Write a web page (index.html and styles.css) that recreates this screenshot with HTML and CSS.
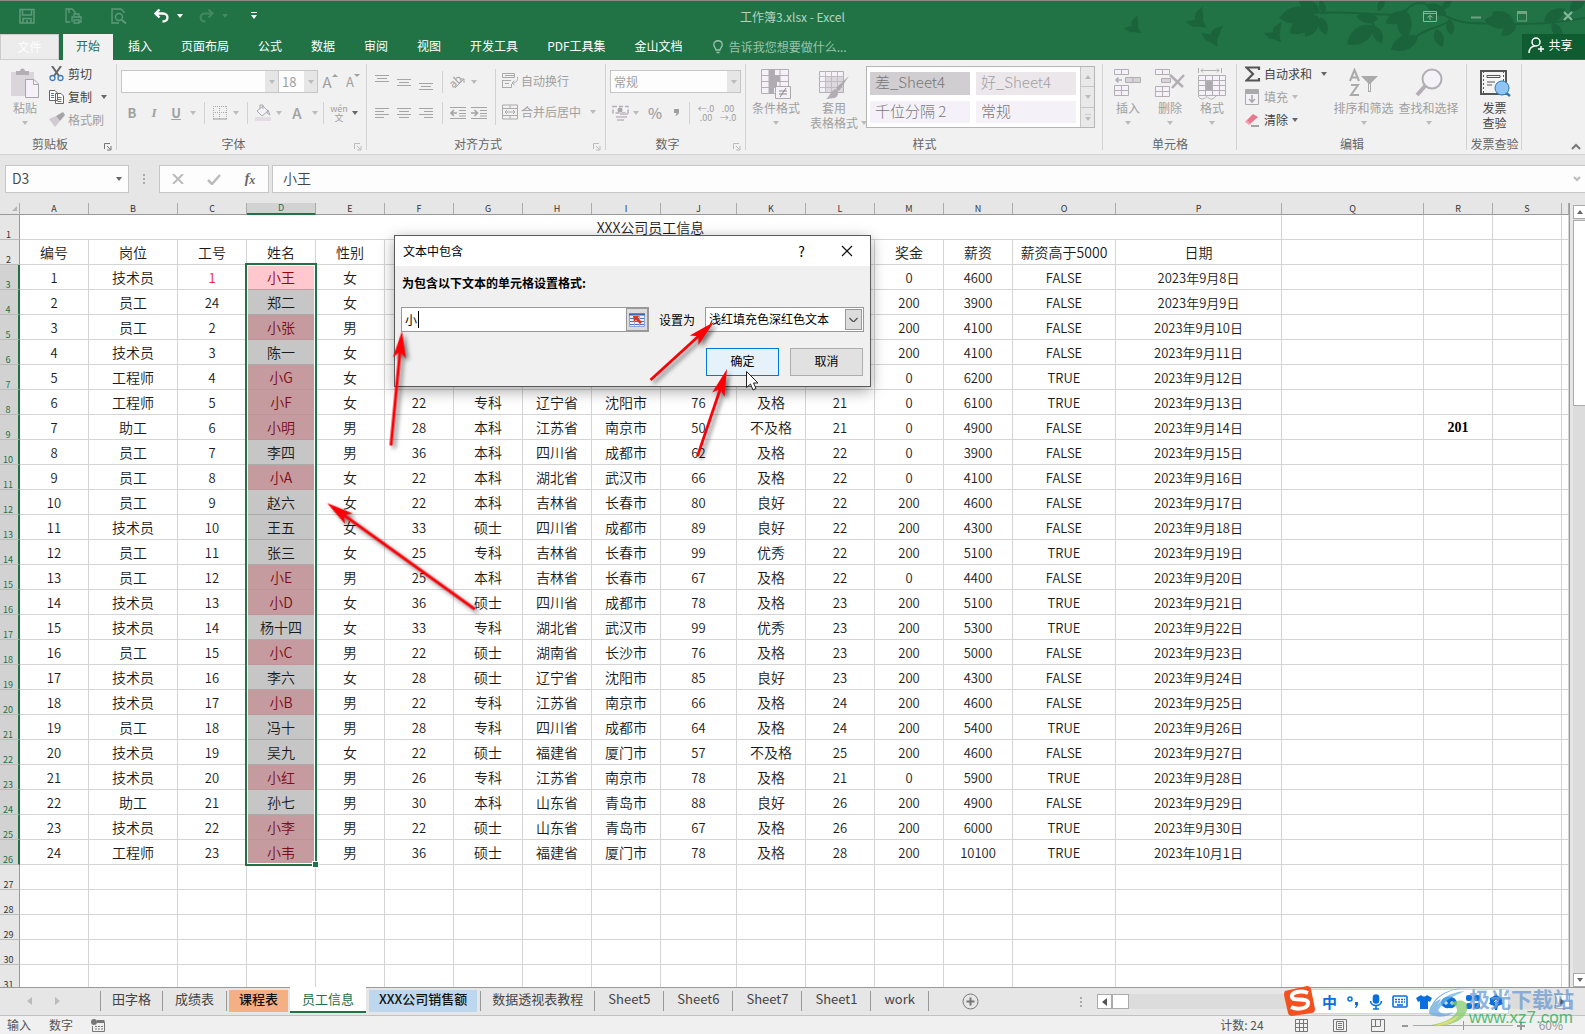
FILE: index.html
```html
<!DOCTYPE html>
<html lang="zh-CN">
<head>
<meta charset="utf-8">
<title>工作簿3.xlsx - Excel</title>
<link rel="stylesheet" href="styles.css">
</head>
<body>
<header class="top">
  <svg class="foliage" width="461" height="60" viewBox="0 0 461 60" aria-hidden="true">
    <defs>
      <path id="leaf" d="M0 0C6-9 18-10 27-2C19 8 7 8 0 0Z"/>
      <path id="bird" d="M0 9L8 7C6 3 9 0 14-4C13 1 15 4 14 8L17 14L9 13C6 14 4 12 0 9Z"/>
    </defs>
    <g fill="#1b633b">
      <use href="#bird" transform="translate(0 18)"/>
      <use href="#bird" transform="translate(62 10) scale(1.2)"/>
      <use href="#bird" transform="translate(82 22) rotate(25) scale(1.2)"/>
      <use href="#bird" transform="translate(142 22) rotate(12) scale(1.1)"/>
      <use href="#leaf" transform="translate(190 12) rotate(176) scale(1.3)"/>
      <use href="#leaf" transform="translate(193 15) rotate(152) scale(1.2)"/>
      <use href="#leaf" transform="translate(196 12) rotate(215) scale(.9)"/>
      <use href="#leaf" transform="translate(194 15) rotate(125) scale(.9)"/>
      <use href="#leaf" transform="translate(196 16) rotate(75) scale(.7)"/>
      <use href="#leaf" transform="translate(200 12) rotate(-100) scale(.5)"/>
      <use href="#leaf" transform="translate(250 25) rotate(150) scale(1.2)"/>
      <use href="#leaf" transform="translate(250 25) rotate(70) scale(.7)"/>
      <use href="#leaf" transform="translate(254 18) rotate(190) scale(.8)"/>
      <use href="#leaf" transform="translate(254 10) rotate(-60) scale(.5)"/>
      <use href="#leaf" transform="translate(280 8) rotate(92) scale(1.1)"/>
      <use href="#leaf" transform="translate(284 12) rotate(160) scale(.9)"/>
      <use href="#leaf" transform="translate(294 36) rotate(160) scale(1.1)"/>
      <use href="#leaf" transform="translate(312 28) rotate(75) scale(.7)"/>
      <use href="#leaf" transform="translate(318 8) rotate(-40) scale(.5)"/>
      <use href="#leaf" transform="translate(303 4) rotate(30) scale(.8)"/>
      <use href="#leaf" transform="translate(325 18) rotate(85) scale(.6)"/>
      <use href="#leaf" transform="translate(390 22) rotate(190) scale(1.1)"/>
      <use href="#leaf" transform="translate(390 22) rotate(210) scale(.9)"/>
      <use href="#leaf" transform="translate(392 23) rotate(145) scale(.7)"/>
      <use href="#leaf" transform="translate(420 20) rotate(-25) scale(.9)"/>
      <use href="#leaf" transform="translate(428 22) rotate(60) scale(.7)"/>
      <use href="#leaf" transform="translate(446 10) rotate(-40) scale(.8)"/>
    </g>
    <g fill="none" stroke="#1b633b" stroke-width="2">
      <path d="M196 12C220 10 244 14 278 14M236 12C244 18 250 22 251 27M282 10C288 2 292 2 300 2C312 10 326 20 346 22C390 24 420 24 461 17M292 36C300 28 312 28 326 20"/>
    </g>
  </svg>
  <div class="titlebar">
    <div class="quick">
      <button class="q1" aria-label="保存"><svg width="16" height="16" fill="none" stroke="#5d9a79" stroke-width="1.5"><path d="M1 1.500H15V15H1ZM3.500 2V7H12.500V2M4 15V10.500H12V15M8 12V15"/></svg></button>
      <button class="q1" aria-label="快速打印"><svg width="17" height="16" fill="none" stroke="#5d9a79" stroke-width="1.300"><path d="M5 14H1V1H7L10 4V6M4 1V5M7 14V9H16V14H14M9 8V6H14V9M9 12H14V15H9Z"/></svg></button>
      <button class="q1" aria-label="打印预览"><svg width="16" height="16" fill="none" stroke="#5d9a79" stroke-width="1.400"><path d="M13 5V4L10 1H1V15H8"/><circle cx="8" cy="9" r="3.500"/><path d="M11 12L15 15.500" stroke-width="2"/></svg></button>
      <button class="undo" aria-label="撤消"><svg width="15" height="14" fill="none" stroke="#fff" stroke-width="2.300"><path d="M1.500 4.500H9C15 4.500 15 12.500 8.500 12.500M5.500 .5L1.500 4.500L5.500 8.500"/></svg><i class="caret white"></i></button>
      <button class="undo" aria-label="恢复"><svg width="15" height="14" fill="none" stroke="#44895f" stroke-width="2"><path d="M13.500 4.500H6C0 4.500 0 12.500 6.500 12.500M9.500 .5L13.500 4.500L9.500 8.500"/></svg><i class="caret dimgreen"></i></button>
      <button class="custom" aria-label="自定义快速访问工具栏"><i class="bar"></i><i class="caret white"></i></button>
    </div>
    <div class="doc-title">工作簿3.xlsx - Excel</div>
    <div class="winctl">
      <button aria-label="功能区显示选项"><svg width="14" height="11" fill="none" stroke="#8ab79d"><path d="M.5 .5H13.500V10.500H.5ZM1 2.500H13M7 9V4.500M4.500 6.500L7 4.500L9.500 6.500"/></svg></button>
      <button aria-label="最小化"><svg width="10" height="11"><path d="M0 6.500H10" stroke="#6fa585" stroke-width="2"/></svg></button>
      <button aria-label="最大化"><svg width="10" height="11" fill="none" stroke="#6fa585"><path d="M.5 .5H9.500V10H.5Z"/><path d="M0 1.500H10" stroke-width="3"/></svg></button>
      <button aria-label="关闭"><svg width="10" height="10" stroke="#8ab79d" stroke-width="2"><path d="M1 1L9 9M9 1L1 9"/></svg></button>
    </div>
  </div>
  <nav class="menubar">
    <button class="file">文件</button>
    <button class="tab on">开始</button>
    <button class="tab">插入</button><button class="tab">页面布局</button><button class="tab">公式</button><button class="tab">数据</button><button class="tab">审阅</button><button class="tab">视图</button><button class="tab">开发工具</button><button class="tab">PDF工具集</button><button class="tab">金山文档</button>
    <button class="tell"><svg width="10" height="14" fill="none" stroke="#9cc3ad" stroke-width="1.300"><path d="M3 10C3 8 .8 7.500 .8 4.800C.8-.6 9.200-.6 9.200 4.800C9.200 7.500 7 8 7 10ZM3.500 12.500H6.500"/></svg>告诉我您想要做什么...</button>
    <button class="share"><svg width="16" height="16" fill="none" stroke="#fff" stroke-width="1.500"><circle cx="8" cy="5" r="4"/><path d="M1 16C1 11.500 4 9 7 9M13 9V15M10 12H16"/></svg>共享</button>
  </nav>
</header>

<section class="ribbon">
  <div class="group g-clip">
    <div class="body">
      <button class="big dim paste"><svg width="30" height="32"><path d="M1 4H24V28H1Z" fill="#d9d5da"/><path d="M6 3H10C10-.5 15-.5 15 3H19V7H6Z" fill="#b3aeb4"/><path d="M15.500 11.500H24L28.500 16V29.500H15.500Z" fill="#f5f1f8" stroke="#aaa5ab"/><path d="M23.500 12V16.500H28" fill="none" stroke="#aaa5ab"/></svg><span>粘贴</span><i class="caret"></i></button>
      <div class="stack">
        <button class="small"><svg width="16" height="16" fill="none"><path d="M3 0L10 10M12 0L5 10" stroke="#666" stroke-width="2"/><circle cx="3.500" cy="12" r="2.500" stroke="#3f7cb8" stroke-width="1.300"/><circle cx="11.500" cy="12" r="2.500" stroke="#3f7cb8" stroke-width="1.300"/></svg>剪切</button>
        <button class="small"><svg width="16" height="16" fill="#fff" stroke="#666"><path d="M.5 1.500H6L8.500 4V11.500H.5ZM6.500 4.500H12L14.500 7V14.500H6.500Z"/><path d="M2 4.500H5M2 6.500H5M2 8.500H5M8.500 8.500H12.500M8.500 10.500H12.500M8.500 12.500H12.500" stroke="#3f7cb8"/></svg>复制<i class="caret dark far"></i></button>
        <button class="small dim"><svg width="16" height="16"><path d="M0 7L7 4L11 9L6 15Z" fill="#d0cbd1"/><path d="M7 4L14 0L16 3L11 9Z" fill="#a5a5a5"/></svg>格式刷</button>
      </div>
    </div>
    <div class="label">剪贴板<svg class="launch dk" width="8" height="8"><use href="#launch"/></svg></div>
  </div>

  <div class="group g-font">
    <div class="body col">
      <div class="row">
        <div class="combo w-name"><input aria-label="字体"><button aria-label="字体列表"><i class="caret"></i></button></div>
        <div class="combo w-size"><input aria-label="字号" value="18"><button aria-label="字号列表"><i class="caret"></i></button></div>
        <button class="ic grow">A<svg width="6" height="3"><path d="M0 3L3 0L6 3Z"/></svg></button>
        <button class="ic grow less">A<svg width="6" height="3"><path d="M0 0L3 3L6 0Z"/></svg></button>
      </div>
      <div class="row">
        <button class="ic b">B</button><button class="ic it">I</button><button class="ic u">U</button><button class="dd" aria-label="下划线选项"><i class="caret"></i></button>
        <i class="vsep"></i>
        <button class="ic n" aria-label="边框"><svg width="14" height="14" fill="none" stroke="#aaa"><path d="M.5 0V13M6.500 0V13M13.500 0V13M0 .5H13M0 6.500H13" stroke-dasharray="1 1"/><path d="M0 13H14" stroke="#999"/></svg></button><button class="dd" aria-label="边框选项"><i class="caret"></i></button>
        <i class="vsep"></i>
        <button class="ic n" aria-label="填充颜色"><svg width="17" height="17"><path d="M2 7L8 2L13 7L7 12Z" fill="#f5f1f8" stroke="#aaa"/><path d="M5 5V1H8V5M13 6L15 11L12 9Z" fill="none" stroke="#aaa"/><path d="M0 13H16V17H0Z" fill="#e3dce5"/></svg></button><button class="dd" aria-label="填充选项"><i class="caret"></i></button>
        <button class="ic big-a">A</button><button class="dd" aria-label="字体颜色选项"><i class="caret"></i></button>
        <i class="vsep short"></i>
        <button class="ic n wen"><span>wén</span><span>文</span></button><button class="dd" aria-label="拼音选项"><i class="caret dark"></i></button>
      </div>
    </div>
    <div class="label">字体<svg class="launch" width="8" height="8"><path id="launch" d="M.5 6V.5H6M3 3L6.500 6.500M7 3V7H3" fill="none" stroke="currentColor"/></svg></div>
  </div>

  <div class="group g-align">
    <div class="body">
      <div class="col">
        <div class="row">
          <button class="ic" aria-label="顶端对齐"><svg width="14" height="16" stroke="#a5a5a5"><path d="M0 1.500H14M2 4.500H12M0 7.500H14"/></svg></button>
          <button class="ic" aria-label="垂直居中"><svg width="14" height="16" stroke="#a5a5a5"><path d="M0 5.500H14M2 8.500H12M0 11.500H14"/></svg></button>
          <button class="ic" aria-label="底端对齐"><svg width="14" height="16" stroke="#a5a5a5"><path d="M0 9.500H14M2 12.500H12M0 15.500H14"/></svg></button>
          <i class="vsep"></i>
          <button class="ic n" aria-label="方向"><svg width="18" height="16"><text x="1" y="12" font-size="11" transform="rotate(-40 6 9)" class="abtext">ab</text><path d="M6 14L15 5M11 5H15V9" fill="none" stroke="#a5a5a5"/></svg></button><button class="dd" aria-label="方向选项"><i class="caret"></i></button>
        </div>
        <div class="row">
          <button class="ic" aria-label="左对齐"><svg width="14" height="12" stroke="#a5a5a5"><path d="M0 1.500H14M0 4.500H9M0 7.500H14M0 10.500H9"/></svg></button>
          <button class="ic" aria-label="居中"><svg width="14" height="12" stroke="#a5a5a5"><path d="M0 1.500H14M2 4.500H12M0 7.500H14M2 10.500H12"/></svg></button>
          <button class="ic" aria-label="右对齐"><svg width="14" height="12" stroke="#a5a5a5"><path d="M0 1.500H14M5 4.500H14M0 7.500H14M5 10.500H14"/></svg></button>
          <i class="vsep"></i>
          <button class="ic n" aria-label="减少缩进"><svg width="16" height="14" fill="none" stroke="#a5a5a5"><path d="M0 1.500H16M9 4.500H16M9 7.500H16M0 12.500H16M9 10H16"/><path d="M7 7H1M4 4L1 7L4 10" stroke-width="1.600"/></svg></button>
          <button class="ic" aria-label="增加缩进"><svg width="16" height="14" fill="none" stroke="#a5a5a5"><path d="M0 1.500H16M9 4.500H16M9 7.500H16M0 12.500H16M9 10H16"/><path d="M0 7H6M3.500 4L6.500 7L3.500 10" stroke-width="1.600"/></svg></button>
        </div>
      </div>
      <i class="vsep tall"></i>
      <div class="col">
        <div class="row"><button class="small dim"><svg width="16" height="16" fill="none" stroke="#aaa"><path d="M.5 .5H12.500V4.500H.5ZM3 2.500H12.500M.5 7.500H9M3 10.500H7M.5 14.500H9.500V11M.5 7V15M15.500 4C16 8 14 10 10 10M12.500 7.500L10 10L12.500 12"/></svg>自动换行</button></div>
        <div class="row"><button class="small dim"><svg width="16" height="16" fill="none" stroke="#aaa"><path d="M.5 1H15.500V15H.5ZM.5 4.500H15.500M.5 11.500H15.500M8 1V4.500M8 11.500V15M3 8H13M5 6L3 8L5 10M11 6L13 8L11 10"/></svg>合并后居中<i class="caret far"></i></button></div>
      </div>
    </div>
    <div class="label">对齐方式<svg class="launch" width="8" height="8"><use href="#launch"/></svg></div>
  </div>

  <div class="group g-num">
    <div class="body col">
      <div class="row"><div class="combo w-fmt"><input aria-label="数字格式" value="常规"><button aria-label="格式列表"><i class="caret"></i></button></div></div>
      <div class="row">
        <button class="ic n" aria-label="会计数字格式"><svg width="17" height="16"><path d="M1 1.500H16V8H1Z" fill="#f5f1f8" stroke="#b3aeb4" stroke-width="1.500" stroke-dasharray="4 2"/><circle cx="8" cy="5" r="2.500" fill="#aaa"/><path d="M8 9H16M9 12H15M4 12H9M5 15H12" stroke="#c9c4ca" stroke-width="2"/></svg></button><button class="dd" aria-label="会计选项"><i class="caret"></i></button>
        <button class="ic pct wide">%</button><button class="ic pct comma" aria-label="千位分隔样式"><svg width="5" height="7"><path d="M0 0H5V3C5 5 3.500 6.500 1 7C2 6 2.500 5 2.500 4H0Z" fill="#a0a0a0"/></svg></button>
        <i class="vsep"></i>
        <button class="ic dec"><span>←.0</span><span>.00</span></button><button class="ic dec"><span>.00</span><span>→.0</span></button>
      </div>
    </div>
    <div class="label">数字<svg class="launch" width="8" height="8"><use href="#launch"/></svg></div>
  </div>

  <div class="group g-style">
    <div class="body">
      <button class="big dim w60"><svg width="30" height="32"><path d="M.5 1.500H27.500V25.500H.5Z" fill="#f5f1f8" stroke="#b3aeb4"/><path d="M8 1V26M19 1V26M0 7.500H28M0 13.500H28M0 19.500H28" stroke="#b3aeb4"/><path d="M8 1H14V7H8ZM8 8H19V13H8ZM8 14H16V19H8ZM8 20H13V25H8Z" fill="#b0abb1"/><path d="M14.500 18.500H29.500V30.500H14.500Z" fill="#f5f1f8" stroke="#aaa"/><path d="M18 23H26M18 26H26M25 20L19 29" stroke="#888"/></svg><span>条件格式</span><i class="caret"></i></button>
      <button class="big dim w60"><svg width="30" height="32"><path d="M.5 3.500H24.500V24.500H.5Z" fill="#f5f1f8" stroke="#b3aeb4"/><path d="M7 9H24V24H7Z" fill="#dcd8de"/><path d="M6.500 3V25M12.500 3V25M18.500 3V25M0 8.500H25M0 13.500H25M0 19.500H25" stroke="#c0bbc1"/><path d="M30 8L20 23L17 20Z" fill="#aaa"/><path d="M17 21C20 22 20 28 16 30L7 31C12 27 11 23 17 21Z" fill="#b3aeb4"/></svg><span>套用<br>表格格式<i class="caret side"></i></span></button>
      <div class="gallery">
        <div class="tiles"><button class="bad">差_Sheet4</button><button class="good">好_Sheet4</button><button>千位分隔 2</button><button>常规</button></div>
        <div class="scroller"><button aria-label="上一行"><i class="caret up"></i></button><button aria-label="下一行"><i class="caret"></i></button><button aria-label="其他"><i class="bar"></i><i class="caret"></i></button></div>
      </div>
    </div>
    <div class="label">样式</div>
  </div>

  <div class="group g-cells">
    <div class="body">
      <button class="big dim w42"><svg width="28" height="32" fill="#f5f1f8" stroke="#b3aeb4"><path d="M.5 1.500H14.500V6.500H.5ZM7.500 1.500V6.500M.5 17.500H14.500V27.500H.5ZM7.500 17.500V27.500M.5 22.500H14.500"/><path d="M11.500 9.500H26.500V14.500H11.500ZM19 9.500V14.500" fill="#d8d3d9"/><path d="M8 12H2M4.500 9.500L2 12L4.500 14.500" fill="none" stroke-width="1.600"/></svg><span>插入</span><i class="caret"></i></button>
      <button class="big dim w42"><svg width="30" height="32" fill="#f5f1f8" stroke="#b3aeb4"><path d="M.5 1.500H14.500V6.500H.5ZM7.500 1.500V6.500M.5 18.500H14.500V28.500H.5ZM7.500 18.500V28.500M.5 23.500H14.500"/><path d="M6.500 10.500H15.500V14.500H6.500Z" fill="#d8d3d9"/><path d="M15 7L28 19M29 7L17 20" stroke-width="2.500" fill="none"/></svg><span>删除</span><i class="caret"></i></button>
      <button class="big dim w42"><svg width="28" height="32" fill="#f5f1f8" stroke="#b3aeb4"><path d="M.5 7.500H27.500V27.500H.5Z"/><path d="M7.500 7V28M14.500 7V28M21.500 7V28M0 12.500H28M0 17.500H28M0 22.500H28" /><path d="M8 13H14V22H8Z" fill="#aaa"/><path d="M.5 0V5M23.500 0V5M3 2.500H21M5 .5L3 2.500L5 4.500M19 .5L21 2.500L19 4.500M0 28C3 32 5 32 9 28.500C12 32 15 32 18 28" fill="none"/></svg><span>格式</span><i class="caret"></i></button>
    </div>
    <div class="label">单元格</div>
  </div>

  <div class="group g-edit">
    <div class="body">
      <div class="stack">
        <button class="small"><svg width="16" height="16"><path d="M14 4V1.500H1.500L8 8L1.500 14.500H14V12" fill="none" stroke="#555" stroke-width="2.200"/></svg>自动求和<i class="caret dark far"></i></button>
        <button class="small dim"><svg width="16" height="16" fill="#f5f1f8" stroke="#aaa"><path d="M.5 .5H13.500V15.500H.5Z"/><path d="M1 3H13" stroke-width="4"/><path d="M7 6V13M4 10L7 13L10 10" fill="none" stroke-width="1.600"/></svg>填充<i class="caret"></i></button>
        <button class="small"><svg width="16" height="16"><path d="M1 9L8 2L13 5L5 12Z" fill="#e8798d"/><path d="M0 10L4 13L6 12L2 8Z" fill="#f0a0ae"/><path d="M6 14H14" stroke="#555"/></svg>清除<i class="caret dark"></i></button>
      </div>
      <button class="big dim w65"><svg width="30" height="32" fill="none" stroke="#aaa" stroke-width="2"><path d="M1 13L5.500 2L10 13M3 9.500H8.500M2 17H9L2 27H10"/><path d="M12 8H29L22 15V24H19V15Z" fill="#aaa" stroke="none"/><path d="M20.500 16V23" stroke="#f5f1f8" stroke-width="1"/></svg><span>排序和筛选</span><i class="caret"></i></button>
      <button class="big dim w65"><svg width="30" height="32"><path d="M3 27L12 17" stroke="#b3aeb4" stroke-width="4"/><circle cx="18" cy="11" r="9.500" fill="#f5f1f8" stroke="#b3aeb4" stroke-width="2"/></svg><span>查找和选择</span><i class="caret"></i></button>
    </div>
    <div class="label">编辑</div>
  </div>

  <div class="group g-inv">
    <div class="body">
      <button class="big"><svg width="32" height="32"><path d="M2 3H27V26H2Z" fill="#f4f4f4" stroke="#555" stroke-width="2" /><path d="M4.500 3V26M24.500 3V26" stroke="#555" stroke-dasharray="2 2"/><path d="M8 7.500H21V9.500H8Z" fill="none" stroke="#555"/><path d="M8 14H16M8 17H13" stroke="#555"/><path d="M26 24L31 28" stroke="#2a7ab8" stroke-width="2.500"/><circle cx="23" cy="20" r="7" fill="#90c4f5" stroke="#2a7ab8"/></svg><span>发票<br>查验</span></button>
    </div>
    <div class="label">发票查验</div>
  </div>
  <button class="collapse" aria-label="折叠功能区"><svg width="10" height="7" fill="none" stroke="#777" stroke-width="2"><path d="M1 6L5 2L9 6"/></svg></button>
</section>

<section class="formula">
  <div class="namebox"><input aria-label="名称框" value="D3"><button aria-label="名称列表"><i class="caret dark"></i></button></div>
  <i class="dots"></i>
  <div class="fx">
    <button aria-label="取消"><svg width="12" height="10" stroke="#bbb" stroke-width="2"><path d="M1 0L11 10M11 0L1 10"/></svg></button>
    <button aria-label="输入"><svg width="14" height="11" fill="none" stroke="#bbb" stroke-width="2.500"><path d="M1 6L5 10L13 1"/></svg></button>
    <button class="fn">f<small>x</small></button>
  </div>
  <div class="entry"><input aria-label="编辑栏" value="小王"><svg width="8" height="6" fill="none" stroke="#bbb" stroke-width="2"><path d="M1 1L4 4L7 1"/></svg></div>
</section>

<main class="work">
  <div class="sheet">
    <table class="cells">
      <colgroup><col class="c20"><col class="c69"><col class="c89"><col class="c69"><col class="c69"><col class="c69"><col class="c69"><col class="c69"><col class="c69"><col class="c69"><col class="c76"><col class="c69"><col class="c69"><col class="c69"><col class="c69"><col class="c103"><col class="c166"><col class="c142"><col class="c69"><col class="c69"><col></colgroup>
      <thead><tr><th><svg width="5" height="5"><path d="M5 0V5H0Z" fill="#b5b5b5"/></svg></th><th>A</th><th>B</th><th>C</th><th class="on">D</th><th>E</th><th>F</th><th>G</th><th>H</th><th>I</th><th>J</th><th>K</th><th>L</th><th>M</th><th>N</th><th>O</th><th>P</th><th>Q</th><th>R</th><th>S</th><th></th></tr></thead>
      <tbody id="rows"></tbody>
    </table>
  </div>
  <div class="vscroll"><button aria-label="向上滚动"><i class="caret up dark"></i></button><i class="thumb"></i><button class="down" aria-label="向下滚动"><i class="caret dark"></i></button></div>
</main>

<footer>
  <div class="sheetbar">
    <div class="nav"><button aria-label="上一个工作表"><svg width="5" height="8"><path d="M5 0V8L0 4Z" fill="#bbb"/></svg></button><button aria-label="下一个工作表"><svg width="5" height="8"><path d="M0 0V8L5 4Z" fill="#bbb"/></svg></button></div>
    <div class="tabs"><button>田字格</button><button>成绩表</button><button class="orange">课程表</button><button class="on">员工信息</button><button class="blue">XXX公司销售额</button><button class="first">数据透视表教程</button><button>Sheet5</button><button>Sheet6</button><button>Sheet7</button><button>Sheet1</button><button>work</button></div>
    <button class="add" aria-label="新工作表"><svg width="17" height="17" fill="none" stroke="#777"><circle cx="8.500" cy="8.500" r="7.500"/><path d="M8.500 4.500V12.500M4.500 8.500H12.500" stroke-width="2"/></svg></button>
    <i class="dots"></i>
    <div class="hscroll"><button aria-label="向左滚动"><svg width="5" height="8"><path d="M5 0V8L0 4Z" fill="#555"/></svg></button><i class="thumb"></i><button class="right" aria-label="向右滚动"><svg width="5" height="8"><path d="M0 0V8L5 4Z" fill="#555"/></svg></button></div>
  </div>
  <div class="status">
    <span>输入</span><span>数字</span>
    <svg width="14" height="13"><path d="M4 1H14V13H2V7" fill="#f0f0f0"/><path d="M6 1H13.500V4H6Z" fill="#777"/><circle cx="3" cy="3" r="3" fill="#777"/><path d="M13.500 3V12.500H1.500V7" fill="none" stroke="#777"/><path d="M4 7.500H12M4 10H12" stroke="#777" stroke-dasharray="2 1"/></svg>
    <span class="count">计数: 24</span>
    <button aria-label="普通"><svg width="14" height="13" fill="none" stroke="#777"><path d="M.5 .5H12.500V12.500H.5ZM4.500 0V13M8.500 0V13M0 4.500H13M0 8.500H13"/></svg></button>
    <button aria-label="页面布局视图"><svg width="14" height="13" fill="none" stroke="#777"><path d="M.5 .5H13.500V12.500H.5ZM3.500 2.500H10.500V10.500H3.500ZM5 4.500H9M5 6.500H9M5 8.500H9"/></svg></button>
    <button aria-label="分页预览"><svg width="14" height="13" fill="none" stroke="#777"><path d="M.5 .5H13.500V12.500H.5ZM4.500 0V7M9.500 0V7.500M0 7.500H9"/></svg></button>
    <div class="zoom"><svg width="8" height="9" stroke="#999" stroke-width="2"><path d="M1 5H7"/></svg><i></i><svg width="8" height="9" stroke="#999" stroke-width="2"><path d="M0 5H8M4 1V9"/></svg></div>
    <span class="pct60">60%</span>
  </div>
</footer>

<form class="dialog" role="dialog" aria-label="文本中包含">
  <div class="dlg-title"><span>文本中包含</span><button type="button">?</button><button type="button" aria-label="关闭"><svg width="12" height="12" stroke="#111" stroke-width="1.200"><path d="M1 1L11 11M11 1L1 11"/></svg></button></div>
  <div class="dlg-body">
    <label class="lead" for="txt">为包含以下文本的单元格设置格式:</label>
    <div class="dlg-row">
      <div class="ref"><input id="txt" value="小"><i class="ibeam"></i><button type="button" aria-label="选择区域"><svg width="16" height="14"><path d="M.5 .5H15.500V13.500H.5Z" fill="#e9effb" stroke="#8aa5d6"/><path d="M0 1.500H16" stroke="#3e66ad" stroke-width="2"/><path d="M1 5.500H15M1 8.500H15M1 11.500H15" stroke="#4a72b8"/><path d="M5.500 3V13M10.500 3V13" stroke="#9fb6de"/><path d="M4 3H10L9 5L13 9L11 11L7 7L5 9Z" fill="#d43a1c"/></svg></button></div>
      <label for="fmt">设置为</label>
      <div class="pick"><select id="fmt"><option>浅红填充色深红色文本</option></select><svg width="9" height="6" fill="none" stroke="#555" stroke-width="1.300"><path d="M.5 1L4.500 5L8.500 1"/></svg></div>
    </div>
    <div class="dlg-btns"><button type="button" class="ok">确定</button><button type="button">取消</button></div>
  </div>
</form>

<svg class="arrows" width="800" height="640" aria-hidden="true">
  <defs><path id="head" d="M0 0L27-6.500L21 0L27 6.500Z"/></defs>
  <g fill="#fb0007" stroke="#fb0007">
    <g transform="translate(402 331) rotate(95.500)"><use href="#head" stroke="none"/><path d="M20 0H115" stroke-width="2.800"/></g>
    <g transform="translate(714 322) rotate(137.600)"><use href="#head" stroke="none"/><path d="M20 0H86" stroke-width="2.800"/></g>
    <g transform="translate(727 369) rotate(108.700)"><use href="#head" stroke="none"/><path d="M20 0H92" stroke-width="2.800"/></g>
    <g transform="translate(327 503) rotate(35.700)"><use href="#head" stroke="none"/><path d="M20 0H182" stroke-width="2.800"/></g>
  </g>
  <path d="M746.500 371.500V387.500L750.500 384L753 390L756 388.500L753.500 383H758Z" fill="#fff" stroke="#222"/>
</svg>

<div class="ime">
  <svg class="sogou" width="32" height="32" viewBox="0 0 32 32"><path d="M1 6L23 1Q26 1 27 4L31 24Q31 27 28 28L8 31Q5 31 4 28L0 10Q0 7 1 6Z" fill="#f4511e"/><path d="M24 8C17 5 7 7 8 12C9 17 24 12 24 18C24 24 13 25 7 22" fill="none" stroke="#fff" stroke-width="4"/></svg>
  <b>中</b>
  <svg width="14" height="14"><circle cx="4" cy="4" r="2" fill="none" stroke="#0a6fdc" stroke-width="1.500"/><path d="M9 7H12V10L10 13H9L10 10H9Z" fill="#0a6fdc"/></svg>
  <svg width="14" height="16" fill="none" stroke="#0a6fdc" stroke-width="1.600"><rect x="4.500" y="1" width="5" height="8" rx="2.500" fill="#0a6fdc"/><path d="M1.500 7C1.500 13 12.500 13 12.500 7M7 12V15M4 15H10"/></svg>
  <svg width="16" height="13" fill="none" stroke="#0a6fdc" stroke-width="1.600"><rect x="1" y="1" width="14" height="11" rx="1"/><path d="M3 4.500H13M3 7H13" stroke-dasharray="2 1"/><path d="M5 10H11"/></svg>
  <svg width="16" height="14" fill="#0a6fdc"><path d="M0 3L5 0Q8 3 11 0L16 3L14 7L12 6V14H4V6L2 7Z"/></svg>
  <svg width="16" height="14"><path d="M3 3Q8 0 13 3Q16 5 16 9Q13 14 8 13Q3 14 0 9Q0 5 3 3Z" fill="#0a6fdc"/><path d="M3 8H7M9 8H13M5 6V10M11 6V10" stroke="#fff"/></svg>
  <svg width="14" height="14" fill="#0a6fdc"><rect width="6" height="6" rx="2"/><rect x="8" width="6" height="6" rx="2"/><rect y="8" width="6" height="6" rx="2"/><rect x="8" y="8" width="6" height="6" rx="2"/></svg>
  <svg width="14" height="16"><path d="M7 0L9 2L13 4V8L14 10L9 12L8 16H6L5 12L0 10L1 8V4L5 2Z" fill="#0a6fdc"/><path d="M7 6V12M5 8L7 6L9 8" fill="none" stroke="#fff"/></svg>
</div>
<div class="mark">
  <svg width="48" height="40" viewBox="0 0 48 40"><path d="M44 1C22 0 4 12 4 26C2 14 16 0 44 1Z" fill="#4f94d4"/><path d="M38 4C18 6 8 16 8 28C16 14 24 10 38 4Z" fill="#62b3e4"/><path d="M14 12C6 24 14 30 26 25C20 32 4 30 2 26C2 18 8 14 14 12Z" fill="#6aa8dc"/><path d="M22 17C34 10 44 14 39 26C34 36 18 40 4 38C18 36 28 30 30 24C30 18 26 17 22 17Z" fill="#86cc6b"/><path d="M32 28C28 36 14 40 6 39C16 36 26 32 32 28Z" fill="#d9d94f"/></svg>
  <div><b>极光下载站</b><span>www.xz7.com</span></div>
</div>
<script src="sheet.js"></script>
</body>
</html>
```
FILE: sheet.js
```js
// Columns A–P of the worksheet, one string per row, starting at row 2.
const records = [
  '编号|岗位|工号|姓名|性别||||||||奖金|薪资|薪资高于5000|日期',
  '1|技术员|1|小王|女||||||||0|4600|FALSE|2023年9月8日',
  '2|员工|24|郑二|女||||||||200|3900|FALSE|2023年9月9日',
  '3|员工|2|小张|男||||||||200|4100|FALSE|2023年9月10日',
  '4|技术员|3|陈一|女||||||||200|4100|FALSE|2023年9月11日',
  '5|工程师|4|小G|女||||||||0|6200|TRUE|2023年9月12日',
  '6|工程师|5|小F|女|22|专科|辽宁省|沈阳市|76|及格|21|0|6100|TRUE|2023年9月13日',
  '7|助工|6|小明|男|28|本科|江苏省|南京市|50|不及格|21|0|4900|FALSE|2023年9月14日',
  '8|员工|7|李四|男|36|本科|四川省|成都市|62|及格|22|0|3900|FALSE|2023年9月15日',
  '9|员工|8|小A|女|22|本科|湖北省|武汉市|66|及格|22|0|4100|FALSE|2023年9月16日',
  '10|员工|9|赵六|女|22|本科|吉林省|长春市|80|良好|22|200|4600|FALSE|2023年9月17日',
  '11|技术员|10|王五|女|33|硕士|四川省|成都市|89|良好|22|200|4300|FALSE|2023年9月18日',
  '12|员工|11|张三|女|25|专科|吉林省|长春市|99|优秀|22|200|5100|TRUE|2023年9月19日',
  '13|员工|12|小E|男|25|本科|吉林省|长春市|67|及格|22|0|4400|FALSE|2023年9月20日',
  '14|技术员|13|小D|女|36|硕士|四川省|成都市|78|及格|23|200|5100|TRUE|2023年9月21日',
  '15|技术员|14|杨十四|女|33|专科|湖北省|武汉市|99|优秀|23|200|5300|TRUE|2023年9月22日',
  '16|员工|15|小C|男|22|硕士|湖南省|长沙市|76|及格|23|200|5000|FALSE|2023年9月23日',
  '17|技术员|16|李六|女|28|硕士|辽宁省|沈阳市|85|良好|23|200|4300|FALSE|2023年9月24日',
  '18|技术员|17|小B|男|22|专科|江苏省|南京市|66|及格|24|200|4600|FALSE|2023年9月25日',
  '19|员工|18|冯十|男|28|专科|四川省|成都市|64|及格|24|200|5400|TRUE|2023年9月26日',
  '20|技术员|19|吴九|女|22|硕士|福建省|厦门市|57|不及格|25|200|4600|FALSE|2023年9月27日',
  '21|技术员|20|小红|男|26|专科|江苏省|南京市|78|及格|21|0|5900|TRUE|2023年9月28日',
  '22|助工|21|孙七|男|30|本科|山东省|青岛市|88|良好|26|200|4900|FALSE|2023年9月29日',
  '23|技术员|22|小李|男|22|硕士|山东省|青岛市|67|及格|26|200|6000|TRUE|2023年9月30日',
  '24|工程师|23|小韦|男|36|硕士|福建省|厦门市|78|及格|28|200|10100|TRUE|2023年10月1日'
];
const body = document.getElementById('rows');
const blanks = n => '<td></td>'.repeat(n);
let html = '<tr><th>1</th><td colspan="16">XXX公司员工信息</td>' + blanks(4) + '</tr>';
for (let row = 2; row <= 31; row++) {
  const selected = row >= 3 && row <= 26;
  html += `<tr><th${selected ? ' class="on"' : ''}>${row}</th>`;
  const record = records[row - 2];
  if (record) {
    record.split('|').forEach((text, col) => {
      const cls = [];
      if (/^[\dA-Z]/.test(text)) cls.push('num');
      if (row === 3 && col === 2) cls.push('red');
      if (selected && col === 3) {
        cls.push('sel');
        if (text.startsWith('小')) cls.push('hit');
        if (row === 3) cls.push('active');
      }
      const frame = row === 3 && col === 3 ? '<i class="frame"></i>' : '';
      html += `<td class="${cls.join(' ')}">${text}${frame}</td>`;
    });
    html += blanks(1) + (row === 9 ? '<td class="serif">201</td>' : blanks(1)) + blanks(2);
  } else {
    html += blanks(20);
  }
  html += '</tr>';
}
body.innerHTML = html;
```
FILE: styles.css
```css
* { box-sizing: border-box; }
html, body { height: 100%; }
body {
  margin: 0;
  display: flex;
  flex-direction: column;
  position: relative;
  overflow: hidden;
  background: #e6e6e6;
  color: #444;
  font: 12px/16px "Noto Sans CJK SC", sans-serif;
}
button, input, select { font: inherit; color: inherit; border: 0; padding: 0; margin: 0; background: none; border-radius: 0; outline: 0; }
button { display: flex; align-items: center; justify-content: center; flex: none; white-space: nowrap; }
svg { display: block; flex: none; }
i { flex: none; }
.caret { display: block; width: 0; height: 0; border: 3px solid transparent; border-top: 4px solid #bbb; border-bottom: 0; }
.caret.up { border-top: 0; border-bottom: 4px solid #bbb; }
.caret.dark { border-top-color: #666; }
.caret.up.dark { border-bottom-color: #666; }
.caret.white { border-top-color: #fff; }
.caret.dimgreen { border-top-color: #44895f; }
.bar { display: block; width: 6px; height: 1px; background: #ccc; margin-bottom: 2px; }

/* title bar and menu */
.top { flex: none; position: relative; background: #217346; border-top: 1px solid #8a8a8a; color: #fff; }
.foliage { position: absolute; right: 0; top: 0; }
.titlebar { position: relative; display: grid; grid-template-columns: 1fr auto 1fr; align-items: center; height: 33px; }
.quick { display: flex; align-items: center; padding: 0 0 4px 4px; }
.q1 { width: 46px; }
.undo { width: 45px; gap: 8px; }
.quick .undo:nth-of-type(4) { margin-left: 4px; }
.custom { flex-direction: column; width: 36px; }
.custom .bar { background: #fff; }
.doc-title { color: #b3d3c0; padding-bottom: 1px; }
.winctl { display: flex; justify-content: flex-end; padding-bottom: 3px; padding-right: 2px; }
.winctl button { width: 46px; }
.winctl button:last-child { width: 30px; margin-left: 8px; }
.menubar { position: relative; display: flex; height: 26px; }
.file { width: 59px; margin-right: 4px; background: #ececec; border: 1px solid #ccc; }
.tab { padding: 0 14px 1px; margin-right: 1px; height: 24px; }
.tab.on { background: #f1f1f1; color: #217346; padding: 0 13px 3px; height: 26px; margin-right: 1px; }
.tell { margin-left: 15px; gap: 6px; color: #9cc3ad; height: 25px; }
.share { margin-left: auto; width: 63px; height: 25px; gap: 4px; padding: 0 6px 4px 0; background: #0e5c2f; }

/* ribbon */
.ribbon { flex: none; display: flex; height: 95px; background: #f1f1f1; border-bottom: 1px solid #d2d2d2; }
.group { flex: none; display: flex; flex-direction: column; position: relative; padding-top: 3px; }
.group::after { content: ""; position: absolute; right: 0; top: 4px; bottom: 4px; border-right: 1px solid #d2d2d2; }
.g-clip { width: 117px; }
.g-font { width: 250px; }
.g-align { width: 239px; }
.g-num { width: 140px; }
.g-style { width: 357px; }
.g-cells { width: 134px; }
.g-edit { width: 230px; }
.g-inv { width: 55px; }
.body { flex: 1; display: flex; padding-left: 4px; }
.col { display: flex; flex-direction: column; padding-top: 3px; }
.g-font .body, .g-num .body { padding-top: 3px; }
.row { display: flex; align-items: center; height: 31px; }
.label { position: relative; height: 20px; line-height: 19px; text-align: center; color: #666; padding-right: 17px; }
.g-style .label, .g-cells .label, .g-edit .label { padding-right: 0; }
.g-inv .label { padding: 0; white-space: nowrap; }
.launch { position: absolute; right: 5px; top: 9px; color: #bbb; }
.launch.dk { color: #777; }
.dim { color: #a0a0a0; }
.stack { display: flex; flex-direction: column; }
.small { justify-content: flex-start; gap: 3px; height: 23px; padding-bottom: 1px; }
.small .caret { margin-left: 1px; }
.small .caret.far { margin-left: 6px; }
.big { flex-direction: column; justify-content: flex-start; align-items: center; padding-top: 5px; }
.big span { line-height: 15px; position: relative; text-align: center; }
.big > .caret { margin-top: 6px; }
.caret.side { position: absolute; right: -9px; bottom: 5px; }
.w60 { width: 58px; }
.w42 { width: 42px; }
.w65 { width: 65px; }
.paste { width: 42px; }
.g-clip .body { gap: 3px; }
.combo { display: flex; height: 23px; border: 1px solid #c6c6c6; background: #fdfdfd; color: #a0a0a0; font-size: 13px; }
.combo input { flex: 1; min-width: 0; padding-left: 3px; }
.combo button { width: 13px; background: #e6e6e6; }
.w-name { width: 158px; }
.w-size { width: 39px; border-left: 0; }
.w-fmt { width: 131px; font-size: 12px; }
.ic { width: 22px; height: 24px; color: #a0a0a0; }
.ic.n { width: 20px; }
.dd { width: 12px; height: 24px; }
.vsep { width: 1px; height: 22px; margin: 0 5px; background: #d2d2d2; }
.vsep.short { margin: 0 5px 0 2px; }
.vsep.tall { height: 56px; margin: 6px 6px 0 5px; }
.grow { font-size: 15px; align-items: center; margin-left: 1px; }
.grow svg { align-self: flex-start; margin-top: 4px; fill: #a0a0a0; }
.less { font-size: 13px; }
.b, .it, .u { font-weight: bold; font-size: 13px; }
.it { font-style: italic; font-family: "Liberation Serif", serif; }
.u { text-decoration: underline; }
.big-a { width: 24px; font-size: 15px; font-weight: 500; }
.wen, .dec { flex-direction: column; font-size: 9px; line-height: 9px; }
.abtext { fill: #a0a0a0; }
.pct { font-size: 15px; font-weight: 500; }
.pct.wide { width: 26px; }
.pct.comma { width: 16px; }
.gallery { display: flex; width: 229px; height: 62px; margin: 3px 0 0 2px; background: #fff; border: 1px solid #b5b5b5; }
.tiles { flex: 1; display: grid; grid-template-columns: 1fr 1fr; gap: 6px; padding: 5px 4px 4px 3px; }
.tiles button { justify-content: flex-start; padding: 0 0 2px 5px; background: #f5f1f8; color: #777; font-size: 15px; font-weight: 300; }
.tiles .bad { background: #d0ced0; }
.tiles .good { background: #ebe7eb; color: #a0a0a0; }
.scroller { display: flex; flex-direction: column; width: 14px; border-left: 1px solid #c6c6c6; background: #e9e9e9; }
.scroller button { flex: 1; flex-direction: column; border-bottom: 1px solid #c6c6c6; }
.scroller button:last-child { border: 0; }
.g-style .body { padding-left: 1px; }
.g-style .gallery { margin-left: 3px; }
.g-edit .body { padding-left: 8px; }
.g-edit .stack { width: 86px; }
.g-inv .body { padding: 0; justify-content: center; }
.collapse { margin: 80px 4px 0 auto; height: 12px; }

/* formula bar */
.formula { flex: none; display: flex; height: 48px; padding: 10px 0 10px 5px; color: #444; font-size: 14px; }
.namebox, .fx, .entry { display: flex; align-items: center; background: #fdfdfd; border: 1px solid #c6c6c6; }
.namebox { width: 124px; }
.namebox input { flex: 1; min-width: 0; padding: 0 0 2px 6px; font-weight: 350; }
.namebox button { width: 18px; }
.dots { width: 2px; height: 10px; align-self: center; background: repeating-linear-gradient(#aaa 0 2px, transparent 2px 4px); }
.formula .dots { margin: 0 14px; }
.fx { width: 110px; }
.fx button { flex: 1; }
.fn { font: italic bold 14px/16px "Liberation Serif", serif; color: #666; }
.fn small { font-size: 12px; align-self: flex-end; line-height: 14px; }
.entry { flex: 1; margin-left: 3px; padding-right: 4px; border-right: 0; }
.entry input { flex: 1; padding: 0 0 2px 10px; font-weight: 350; }

/* worksheet */
.work { flex: 1; min-height: 0; display: flex; }
.sheet { flex: 1; min-width: 0; overflow: hidden; border-right: 1px solid #999; }
.cells { table-layout: fixed; width: 100%; border-collapse: separate; border-spacing: 0; background: #fff; color: #1a1a1a; font-size: 14px; font-weight: 350; }
.c20 { width: 20px; } .c69 { width: 69px; } .c76 { width: 76px; } .c89 { width: 89px; }
.c103 { width: 103px; } .c142 { width: 142px; } .c166 { width: 166px; }
.cells th { padding: 0; background: #e6e6e6; color: #333; font-weight: 400; font-size: 9px; }
.cells thead th { height: 12px; line-height: 11px; border-right: 1px solid #aaa; border-bottom: 1px solid #999; }
.cells thead svg { margin: 0 0 0 12px; }
.cells thead .on { background: #d2d2d2; color: #217346; border-bottom: 2px solid #217346; line-height: 10px; }
.cells tbody th { height: 25px; line-height: 9px; padding: 0 2px 0 0; vertical-align: bottom; border-right: 1px solid #999; border-bottom: 1px solid #bbb; }
.cells tbody .on { background: #d2d2d2; color: #217346; border-right: 2px solid #217346; }
.cells td { height: 25px; padding: 0; line-height: 24px; text-align: center; white-space: nowrap; border-right: 1px solid #d4d4d4; border-bottom: 1px solid #d4d4d4; }
.cells .num { padding-top: 2px; font-size: 13px; line-height: 22px; }
.cells .red { color: #f0261a; }
.cells .sel { background: #c6c6c6; border-bottom-color: #aaa; }
.cells .hit { background: #c59b9f; border-bottom-color: #bd9599; color: #7c0c19; }
.cells .active { position: relative; z-index: 1; background: #ffc7ce; border-bottom-color: #c59b9f; color: #9c0006; }
.cells .serif { padding-top: 2px; font: bold 14px/22px "Liberation Serif", serif; color: #000; }
.frame { position: absolute; left: -2px; top: -2px; right: -2px; height: calc(24 * 25px + 3px); border: 2px solid #217346; box-shadow: inset 0 0 0 1px #fff; }
.frame::after { content: ""; position: absolute; right: -3px; bottom: -3px; width: 5px; height: 5px; background: #217346; box-shadow: 0 0 0 1px #fff; }
.vscroll { flex: none; display: flex; flex-direction: column; width: 12px; margin: 2px 0 0 3px; background: #dcdcdc; }
.vscroll button { height: 14px; background: #fff; border: 1px solid #ababab; border-right: 0; }
.vscroll .thumb { height: 186px; margin-top: 1px; background: #fff; border: 1px solid #ababab; border-right: 0; }
.vscroll .down { margin-top: auto; }

/* sheet tabs and status bar */
footer { flex: none; }
.sheetbar { display: flex; align-items: flex-start; height: 29px; border-top: 1px solid #999; border-bottom: 1px solid #c2c2c2; }
.nav { display: flex; width: 100px; height: 25px; padding-left: 15px; }
.nav button { width: 28px; }
.tabs { display: flex; align-items: flex-start; font-size: 13px; }
.tabs button { height: 20px; margin-top: 3px; padding: 0 11px 4px; border-right: 1px solid #999; }
.tabs button:first-child { border-left: 1px solid #999; }
.tabs button:nth-child(2) { padding: 0 12px 4px; }
.tabs .orange, .tabs .blue { height: 22px; margin: 2px 3px 0; padding: 0 10px 4px; border: 0; color: #111; font-weight: 500; }
.tabs .orange { background: #f4b084; margin: 2px 2px 0; }
.tabs .blue { background: #bdd7ee; }
.tabs .on { height: 26px; margin-top: -1px; padding: 0 12px 1px; background: #fff; color: #217346; border: 0; border-bottom: 2px solid #217346; }
.tabs .first { border-left: 1px solid #999; padding: 0 11px 4px; }
.tabs .first ~ button { padding: 0 13px 4px; }
.add { width: 17px; margin: 5px 0 0 33px; }
.sheetbar .dots { margin: 0 15px 0 auto; }
.hscroll { display: flex; width: 473px; height: 15px; margin: 6px 15px 0 0; background: #dcdcdc; }
.hscroll button { width: 15px; background: #fff; border: 1px solid #ababab; }
.hscroll .thumb { width: 17px; background: #fff; border: 1px solid #ababab; }
.hscroll .right { margin-left: auto; }
.status { display: flex; align-items: center; height: 18px; padding: 0 22px 0 7px; background: #f0f0f0; color: #555; }
.status > span { margin-right: 18px; }
.status > .count { margin: 0 19px 0 auto; }
.status button { width: 38px; }
.zoom { display: flex; align-items: center; gap: 4px; margin-left: 4px; }
.zoom i { width: 100px; height: 9px; background: linear-gradient(#aaa, #aaa) 0 4px / 100% 1px no-repeat, linear-gradient(#999, #999) 50px 0 / 1px 9px no-repeat; }
.status > .pct60 { margin: 0 0 0 14px; color: #999; }

/* conditional format dialog */
.dialog { position: absolute; left: 394px; top: 235px; width: 477px; background: #f0f0f0; color: #000; border: 1px solid #5a5a5a; box-shadow: 0 4px 14px rgba(0, 0, 0, .35); }
.dlg-title { display: flex; align-items: center; height: 30px; padding-left: 8px; background: #fff; }
.dlg-title span { flex: 1; }
.dlg-title button { width: 45px; font-size: 14px; }
.dlg-title button:last-child { margin-right: 1px; }
.dlg-body { padding: 9px 6px 10px 6px; }
.lead { display: block; font-weight: bold; line-height: 16px; margin-left: 1px; }
.dlg-row { display: flex; align-items: center; justify-content: space-between; margin-top: 16px; }
.ref { display: flex; align-items: center; width: 248px; height: 25px; background: #fff; border: 1px solid #999; }
.ref input { width: 16px; padding-left: 3px; }
.ibeam { width: 1px; height: 17px; background: #000; }
.ref button { width: 22px; height: 23px; margin-left: auto; background: #dcdcdc; border: 1px solid #999; }
.pick { display: grid; width: 159px; height: 25px; background: #fff; border: 1px solid #999; }
.pick > * { grid-area: 1 / 1; }
.pick select { appearance: none; padding: 0 0 2px 3px; }
.pick svg { justify-self: end; align-self: center; width: 17px; height: 21px; padding: 7px 3px; margin-right: 1px; background: #dcdcdc; border: 1px solid #999; pointer-events: none; }
.dlg-btns { display: flex; justify-content: flex-end; gap: 11px; margin: 16px 1px 0 0; }
.dlg-btns button { width: 73px; height: 28px; padding-bottom: 2px; background: #e1e1e1; border: 1px solid #adadad; }
.dlg-btns .ok { background: #e5f1fb; border-color: #0078d7; }

/* pointers drawn over the sheet */
.arrows { position: absolute; left: 0; top: 0; pointer-events: none; }
.arrows g[fill] { filter: drop-shadow(3px 3px 2px rgba(0, 0, 0, .5)); }

/* input method bar and site mark */
.ime { position: absolute; right: 76px; bottom: 20px; display: flex; align-items: center; justify-content: space-between; width: 213px; height: 25px; padding: 0 5px 0 25px; background: #fff; border: 1px solid #c8d8f0; color: #0a6fdc; font-size: 15px; }
.ime .sogou { position: absolute; left: -13px; top: -5px; }
.mark { position: absolute; right: 11px; bottom: 7px; display: flex; opacity: .75; }
.mark div { display: flex; flex-direction: column; margin-left: -6px; }
.mark b { font-size: 21px; line-height: 22px; font-weight: 700; color: #6a9bd3; }
.mark span { font: 17px/18px "Liberation Sans", sans-serif; color: #22ad4c; }
```
